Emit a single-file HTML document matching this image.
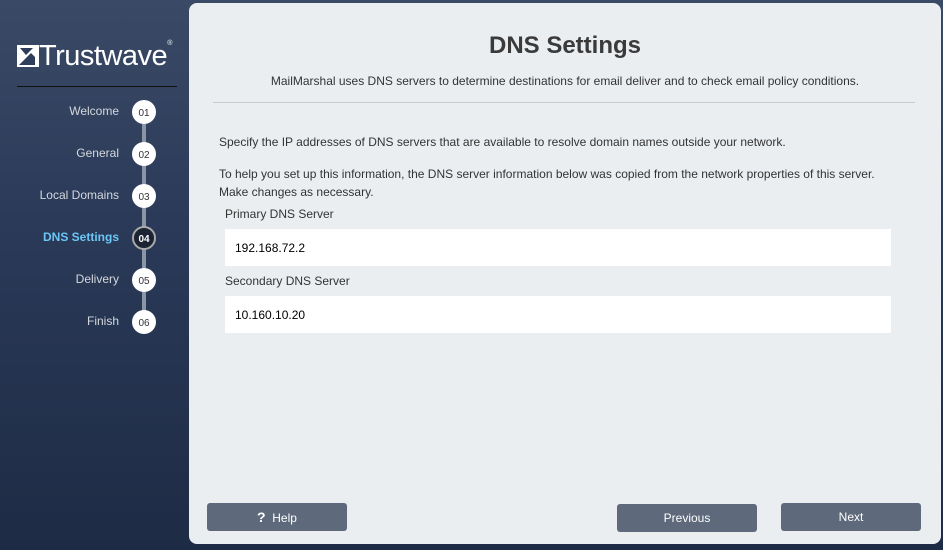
<!DOCTYPE html>
<html><head><style>
body{margin:0;width:943px;height:550px;overflow:hidden;background:linear-gradient(180deg,#3a4a66 0%,#2a3a58 40%,#1e2b45 100%);font-family:"Liberation Sans",sans-serif;position:relative}
.panel{position:absolute;left:189px;top:3px;width:752px;height:541px;background:#ebeef1;border-radius:8px}
.logo{position:absolute;left:17px;top:40px;color:#fff;font-size:29px;letter-spacing:-0.5px}
.hr{position:absolute;left:17px;top:86px;width:160px;height:1px;background:#111}
.step{position:absolute;right:824px;font-size:12px;color:#d5d8de;text-align:right}
.c{position:absolute;left:132px;width:24px;height:24px;border-radius:50%;background:#fff;color:#333;font-size:10px;display:flex;align-items:center;justify-content:center;padding-top:2px;box-sizing:border-box}
.line{position:absolute;left:142px;top:110px;width:4px;height:212px;background:#8a95a5}
.btn{position:absolute;height:28px;background:#5e6a7b;color:#fff;font-size:12px;text-align:center;line-height:29px;border-radius:3px}
input{position:absolute;left:225px;width:666px;height:37px;border:none;background:#fff;font:12px "Liberation Sans",sans-serif;padding:0 0 0 10px;box-sizing:border-box}
.t{position:absolute;font-size:12px;color:#333}
</style></head><body>
<div class="logo"><svg width="22" height="22" viewBox="0 0 22 22" style="vertical-align:-2px"><path d="M0 0H22V22H0Z" fill="#fff"/><path d="M3 3L16 3L9 10Z M2 20L14 8L18 12L18 20Z" fill="#2e3d5a"/></svg>Trustwave<span style="font-size:7px;vertical-align:top">®</span></div>
<div class="hr"></div>
<div class="line"></div>
<div class="step" style="top:104px">Welcome</div><div class="c" style="top:100px">01</div>
<div class="step" style="top:146px">General</div><div class="c" style="top:142px">02</div>
<div class="step" style="top:188px">Local Domains</div><div class="c" style="top:184px">03</div>
<div class="step" style="top:230px;color:#6cc6f5;font-weight:bold">DNS Settings</div><div class="c" style="top:226px;background:#1c2333;color:#fff;font-weight:bold;border:2px solid #aaa">04</div>
<div class="step" style="top:272px">Delivery</div><div class="c" style="top:268px">05</div>
<div class="step" style="top:314px">Finish</div><div class="c" style="top:310px">06</div>
<div class="panel"></div>
<div class="t" style="left:189px;width:752px;top:32px;text-align:center;font-size:24px;font-weight:bold;color:#3a3a3a">DNS Settings</div>
<div class="t" style="left:189px;width:752px;top:74px;text-align:center">MailMarshal uses DNS servers to determine destinations for email deliver and to check email policy conditions.</div>
<div style="position:absolute;left:213px;top:102px;width:702px;height:1px;background:#c8ccd0"></div>
<div class="t" style="left:219px;top:135px">Specify the IP addresses of DNS servers that are available to resolve domain names outside your network.</div>
<div class="t" style="left:219px;top:165px;line-height:18px">To help you set up this information, the DNS server information below was copied from the network properties of this server.<br>Make changes as necessary.</div>
<div class="t" style="left:225px;top:207px">Primary DNS Server</div>
<input style="top:229px" value="192.168.72.2">
<div class="t" style="left:225px;top:274px">Secondary DNS Server</div>
<input style="top:296px" value="10.160.10.20">
<div class="btn" style="left:207px;top:503px;width:140px"><b style="font-size:14px">?</b>&nbsp; Help</div>
<div class="btn" style="left:617px;top:504px;width:140px">Previous</div>
<div class="btn" style="left:781px;top:503px;width:140px">Next</div>
</body></html>
